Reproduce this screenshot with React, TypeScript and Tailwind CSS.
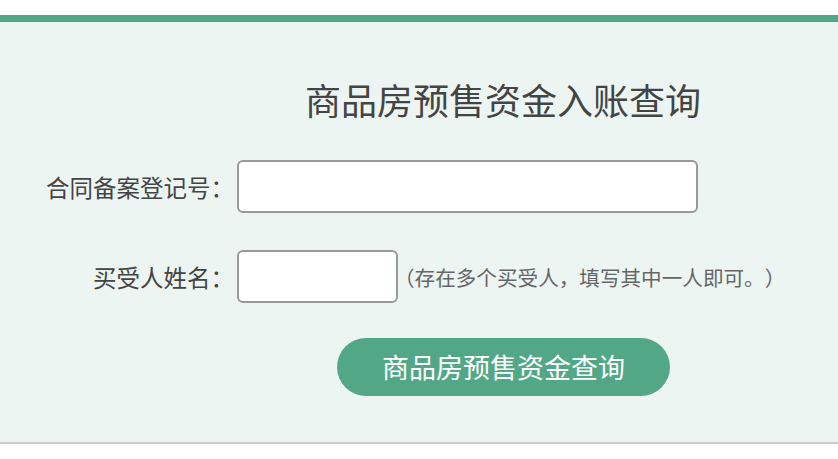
export default function App() {
  return (
    <div className="min-h-[459px] bg-white pt-[15px] font-['Noto_Sans_CJK_SC','Noto_Sans',sans-serif]">
      <div className="h-[7px] bg-[#52a886]" />
      <section className="h-[422px] border-b-2 border-[#cccccc] bg-[#ecf5f1]">
        <h1 className="pl-[305px] pt-[56px] text-[36px] leading-[43px] text-[#444444]">
          商品房预售资金入账查询
        </h1>

        <div className="mt-[39px] flex items-center">
          <label className="w-[234px] text-right text-[23.5px] leading-[30px] text-[#444444]">
            合同备案登记号：
          </label>
          <input
            type="text"
            className="ml-[3px] h-[53px] w-[461px] rounded-[6px] border-2 border-[#999999] bg-white px-3 text-[20px] outline-none"
          />
        </div>

        <div className="mt-[37px] flex items-center">
          <label className="w-[234px] text-right text-[23.5px] leading-[30px] text-[#444444]">
            买受人姓名：
          </label>
          <input
            type="text"
            className="ml-[3px] h-[53px] w-[161px] rounded-[6px] border-2 border-[#999999] bg-white px-3 text-[20px] outline-none"
          />
          <span className="-ml-[4px] text-[20.6px] leading-[28px] text-[#666666] [text-spacing-trim:space-all]">
            （存在多个买受人，填写其中一人即可。）
          </span>
        </div>

        <div className="mt-[35px] pl-[337px]">
          <button
            type="button"
            className="h-[58px] w-[333px] rounded-full bg-[#52a886] text-[27px] leading-[58px] text-white"
          >
            商品房预售资金查询
          </button>
        </div>
      </section>
    </div>
  )
}
